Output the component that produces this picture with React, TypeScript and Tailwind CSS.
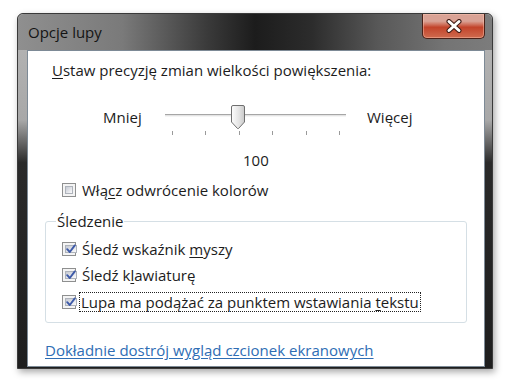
import type { ReactNode } from 'react';

const Checkbox = ({ checked }: { checked?: boolean }) => (
  <span className='w-[14px] h-[14px] border border-[#8e8f8f] bg-[#f4f4f4] p-[2px] flex shrink-0'>
    <span className='flex-1 flex items-center justify-center border border-[#aeb3bb] bg-linear-to-br from-[#c6cad3] to-[#fbfbfc]'>
      {checked && (
        <svg width='10' height='10' viewBox='0 0 10 10' className='-mt-[1px]'>
          <path d='M1.2 5.2 L3.8 8 L8.8 1.4' fill='none' stroke='#3d5aa8' strokeWidth='1.9' strokeLinecap='round' strokeLinejoin='round' />
        </svg>
      )}
    </span>
  </span>
);

const Row = ({ checked, children }: { checked?: boolean; children: ReactNode }) => (
  <div className='flex items-center h-[20px] gap-[6px]'>
    <Checkbox checked={checked} />
    {children}
  </div>
);

const Slider = () => {
  const ticks = [0, 1, 2, 3, 4, 5];
  return (
    <div className='flex flex-col'>
      <div className='flex items-center h-[24px] ml-[58px]'>
        <span className='w-[62px]'>Mniej</span>
        <div className='relative w-[181px] h-[24px]'>
          <div className='absolute left-0 right-0 top-[9px] h-[3px] bg-[#e4e4e4] border-t border-[#a6a6a6] border-b border-b-[#f5f5f5]' />
          <svg className='absolute left-[66px] top-0' width='14' height='24' viewBox='0 0 14 24'>
            <defs>
              <linearGradient id='thumb' x1='0' y1='0' x2='1' y2='0'>
                <stop offset='0' stopColor='#fdfdfd' />
                <stop offset='0.6' stopColor='#e2e2e2' />
                <stop offset='1' stopColor='#c9c9c9' />
              </linearGradient>
            </defs>
            <path d='M2 0.5 H12 Q13.5 0.5 13.5 2 V17 L7.5 23.5 H6.5 L0.5 17 V2 Q0.5 0.5 2 0.5 Z' fill='url(#thumb)' stroke='#6f6f6f' />
          </svg>
        </div>
        <span className='ml-[21px]'>Więcej</span>
      </div>
      <div className='flex ml-[127px] mt-[2px] h-[4px]'>
        {ticks.map((t) => (
          <span key={t} className={`w-[1px] h-[4px] bg-[#9a9a9a] ${t === 0 ? '' : 'ml-[32.4px]'}`} />
        ))}
      </div>
    </div>
  );
};

export default function App() {
  return (
    <div className="w-[510px] h-[380px] bg-white pt-[13px] pl-[17px] font-['Open_Sans',sans-serif] text-[15px] text-[#1c1c1c]">
      <div className='w-[476px] h-[356px] rounded-t-[6px] flex flex-col shadow-[2px_3px_7px_rgba(0,0,0,0.35)] bg-[#2a2a2a] [background-image:linear-gradient(180deg,#b6b6b6_0%,#a8a8a8_30%,#2a2a2a_42%,#1e1e1e_100%)] border border-[#3a3a3a]'>
        <div className='h-[36px] flex items-start justify-between rounded-t-[6px] [background-image:linear-gradient(90deg,#8f8f8f_0%,#7a7a7a_22%,#3a3a3a_40%,#1c1c1c_50%,#2c2c2c_62%,#585858_76%,#747474_90%,#7c7c7c_100%)]'>
          <span className='ml-[10px] mt-[8px] text-[15px] leading-[20px] text-[#141414]'>Opcje lupy</span>
          <div className='mr-[7px] w-[63px] h-[25px] rounded-b-[5px] border border-t-0 border-[#4a2118] flex items-center justify-center bg-linear-to-b from-[#d9a295] from-30% via-[#c2432a] via-55% to-[#cf6a4e] shadow-[inset_0_0_0_1px_rgba(255,200,180,0.45)]'>
            <svg width='18' height='14' viewBox='0 0 18 14'>
              <path d='M4 2.5 L14 11.5 M14 2.5 L4 11.5' stroke='#3b1a14' strokeWidth='5' strokeLinecap='round' />
              <path d='M4 2.5 L14 11.5 M14 2.5 L4 11.5' stroke='#ffffff' strokeWidth='3' strokeLinecap='round' />
            </svg>
          </div>
        </div>
        <div className='ml-[9px] mr-[7px] h-[317px] bg-white border border-[#7d8a96] px-[17px] flex flex-col'>
          <div className='ml-[7px] mt-[9px] leading-[20px]'>
            <span className='underline underline-offset-2'>U</span>staw precyzję zmian wielkości powiększenia:
          </div>
          <div className='mt-[25px]'>
            <Slider />
          </div>
          <div className='mt-[15px] leading-[20px] ml-[198px]'>100</div>
          <div className='mt-[10px] ml-[17px]'>
            <Row>
              <span>
                Włą<span className='underline underline-offset-2'>c</span>z odwrócenie kolorów
              </span>
            </Row>
          </div>
          <fieldset className='mt-[11px] w-[422px] border border-[#d5dfe5] rounded-[3px] pl-[16px] pb-[10px]'>
            <legend className='-ml-[6px] px-[1px] leading-[20px]'>Śledzenie</legend>
            <div className='mt-[8px]'>
              <Row checked>
                <span>
                  Śledź wskaźnik <span className='underline underline-offset-2'>m</span>yszy
                </span>
              </Row>
            </div>
            <div className='mt-[6px]'>
              <Row checked>
                <span>
                  Śledź k<span className='underline underline-offset-2'>l</span>awiaturę
                </span>
              </Row>
            </div>
            <div className='mt-[7px]'>
              <Row checked>
                <span className='h-[20px] flex items-center border border-dotted border-[#222] px-[1px] -ml-[3px]'>
                  <span>
                    Lupa ma podążać za punktem wstawiania <span className='underline underline-offset-2'>t</span>ekstu
                  </span>
                </span>
              </Row>
            </div>
          </fieldset>
          <a className='mt-[17px] leading-[20px] text-[#2e6db4] underline underline-offset-2 decoration-[#2e6db4] self-start'>
            Dokładnie dostrój wygląd czcionek ekranowych
          </a>
        </div>
      </div>
    </div>
  );
}
